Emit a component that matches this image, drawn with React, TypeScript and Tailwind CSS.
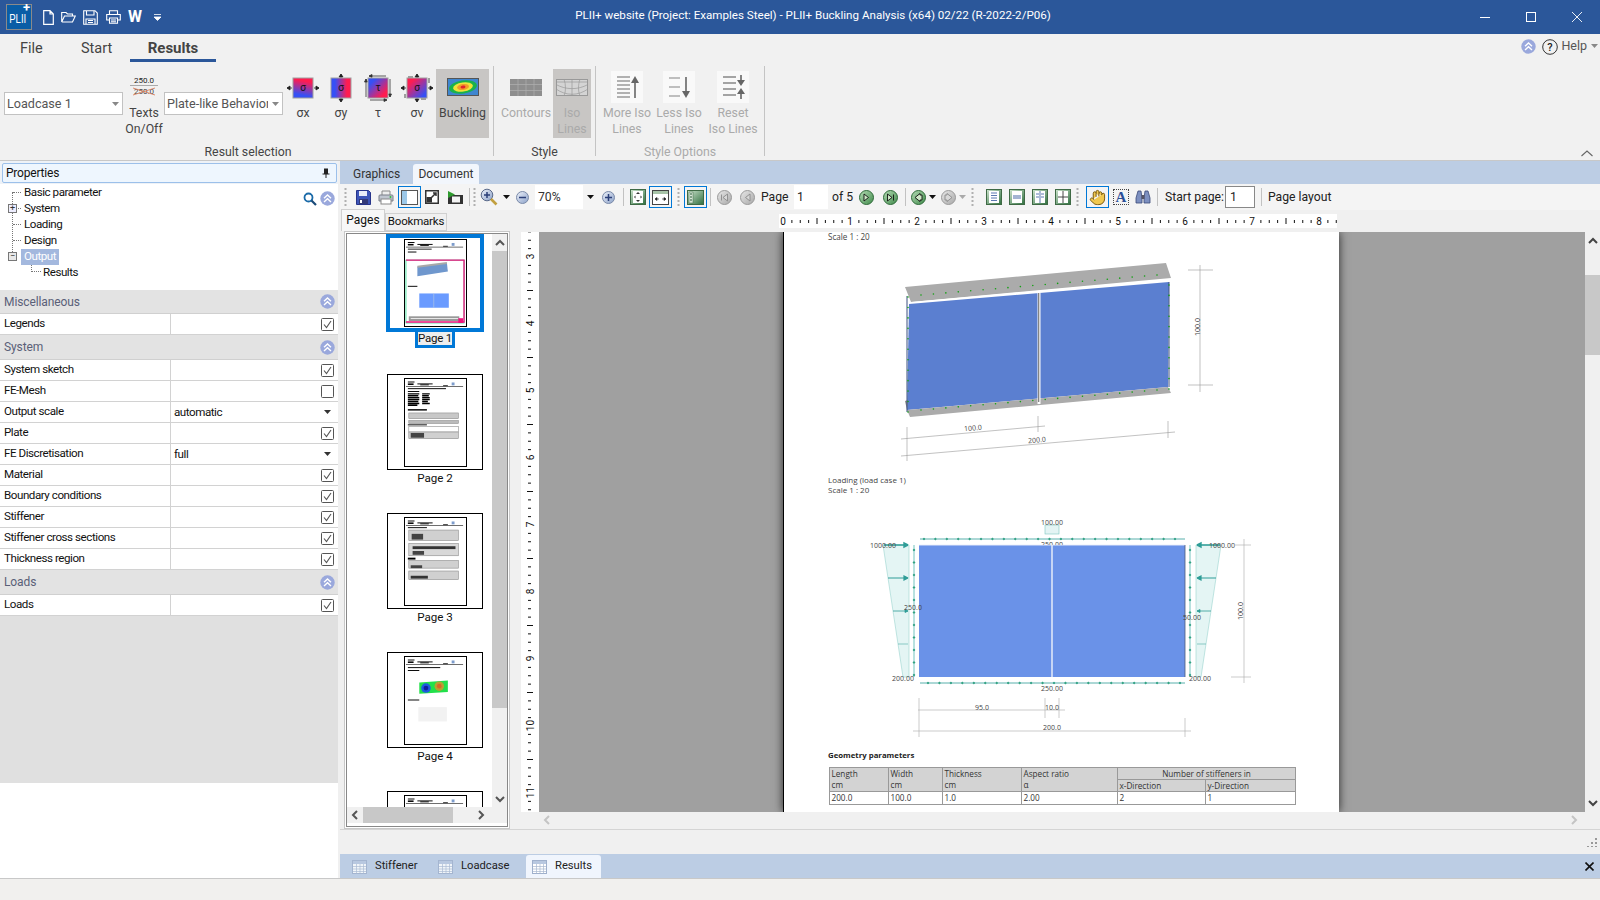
import React from "react";
import { Hand } from "lucide-react";

const S = ({ w, h, vb, children, className }: { w: number; h: number; vb?: string; children: React.ReactNode; className?: string }) => (
  <svg width={w} height={h} viewBox={vb ?? `0 0 ${w} ${h}`} className={"shrink-0 " + (className ?? "")}>{children}</svg>
);

const Defs = () => (
  <svg width="0" height="0" className="absolute">
    <defs>
      <linearGradient id="gx" x1="0.6" y1="0" x2="0.4" y2="1"><stop offset="0.15" stopColor="#ff1c50" /><stop offset="0.85" stopColor="#3650f5" /></linearGradient>
      <linearGradient id="gy" x1="0" y1="0.5" x2="1" y2="0.5"><stop offset="0.2" stopColor="#3650f5" /><stop offset="0.8" stopColor="#ff1c50" /></linearGradient>
      <linearGradient id="gt" x1="0" y1="0" x2="1" y2="1"><stop offset="0.2" stopColor="#3650f5" /><stop offset="0.8" stopColor="#ff1c50" /></linearGradient>
      <linearGradient id="gv" x1="0" y1="0" x2="1" y2="1"><stop offset="0.2" stopColor="#ff1c50" /><stop offset="0.85" stopColor="#3650f5" /></linearGradient>
      <linearGradient id="grn" x1="0" y1="0" x2="1" y2="1"><stop offset="0" stopColor="#b6dcb6" /><stop offset="1" stopColor="#3f8a4a" /></linearGradient>
      <linearGradient id="gry" x1="0" y1="0" x2="1" y2="1"><stop offset="0" stopColor="#e8e8e8" /><stop offset="1" stopColor="#a8a8a8" /></linearGradient>
      <linearGradient id="sq" x1="0" y1="0" x2="1" y2="1"><stop offset="0" stopColor="#cfe5cf" /><stop offset="1" stopColor="#2f6f3f" /></linearGradient>
      <linearGradient id="blu" x1="0" y1="0" x2="1" y2="1"><stop offset="0" stopColor="#eef2fa" /><stop offset="1" stopColor="#8aa0c8" /></linearGradient>
    </defs>
  </svg>
);

const Chevs = () => (
  <S w={15} h={15}>
    <circle cx="7.5" cy="7.5" r="7.2" fill="#9aa8dc" />
    <path d="M4 7.2 7.5 4 11 7.2M4 11 7.5 7.8 11 11" stroke="#fff" strokeWidth="1.4" fill="none" />
  </S>
);

const Check = ({ on = true }: { on?: boolean }) => (
  <S w={13} h={13}>
    <rect x="0.5" y="0.5" width="12" height="12" rx="1" fill="#fff" stroke="#555" />
    {on && <path d="M3 6.5 5.5 9.5 10 3" stroke="#555" strokeWidth="1.1" fill="none" />}
  </S>
);

const Caret = ({ c = "#111" }: { c?: string }) => (
  <S w={7} h={4}><path d="M0 0h7L3.5 4z" fill={c} /></S>
);

const Combo = ({ text, className }: { text: string; className: string }) => (
  <div className={"w-[119px] h-[23px] bg-white border border-[#c2c2c2] flex items-center pl-[2px] pr-[3px] text-[12.6px] text-[#555] " + className}>
    <span className="flex-1 overflow-hidden whitespace-nowrap mr-[4px] pt-[1px]">{text}</span>
    <Caret c="#888" />
  </div>
);

const Btn = ({ icon, children, className }: { icon: React.ReactNode; children: React.ReactNode; className: string }) => (
  <div className={"mt-[7px] h-[69px] flex flex-col items-center shrink-0 " + className}>
    <div className="h-[36px] flex items-center justify-center">{icon}</div>
    <div className="text-center leading-[15.5px] text-[12.3px] pt-[1px]">{children}</div>
  </div>
);

const Stress = ({ g, sym, kind }: { g: string; sym: string; kind: "x" | "y" | "t" | "v" }) => (
  <S w={32} h={28} vb="0 0 32 28" className="mt-[2px]">
    {(kind === "x" || kind === "v") && <path d="M0 14h5M27 14h5M0 14l3-2v4zM32 14l-3-2v4z" stroke="#222" strokeWidth="0.8" fill="#222" />}
    {(kind === "y" || kind === "v") && <path d="M16 0v4M16 24v4M16 0l-2 3h4zM16 28l-2-3h4z" stroke="#222" strokeWidth="0.8" fill="#222" />}
    {kind === "t" && <path d="M7 2h17M8 26h17M4 5v18M28 5v18M7 2l3-1.5v3zM25 26l-3-1.5v3zM4 5l-1.5 3h3zM28 23l-1.5-3h3z" stroke="#333" strokeWidth="0.8" fill="#333" />}
    {kind === "v" && <path d="M7 3h5M20 25h5M4 20v4M28 4v5" stroke="#222" strokeWidth="0.8" fill="none" />}
    <rect x="6" y="4" width="20" height="20" fill={`url(#${g})`} stroke="#a0a0a0" />
    <text x="16" y="17" textAnchor="middle" fontSize="10" fill="#111">{sym}</text>
  </S>
);

const IsoBtnBg = ({ children }: { children: React.ReactNode }) => (
  <S w={32} h={32}><rect width="32" height="32" fill="#f9f9f9" />{children}</S>
);

const Grip = ({ className }: { className: string }) => (
  <S w={3} h={20} vb="0 0 3 20" className={className}>
    {[1, 5, 9, 13, 17].map((y) => <rect key={y} x="0.5" y={y} width="2" height="2" fill="#b0b0b0" />)}
  </S>
);
const Sep = ({ className }: { className: string }) => <div className={"w-px h-[18px] bg-[#c2c2c2] shrink-0 " + className} />;

const Boxed = ({ className, children }: { className: string; children: React.ReactNode }) => (
  <div className={"w-[23px] h-[22px] border border-[#0078d7] flex items-center justify-center shrink-0 " + className}>{children}</div>
);

const Round = ({ on, glyph, className }: { on: boolean; glyph: string; className: string }) => (
  <S w={15} h={15} className={className}>
    <circle cx="7.5" cy="7.5" r="7" fill={on ? "url(#grn)" : "url(#gry)"} stroke={on ? "#2f6b3a" : "#9a9a9a"} />
    <path d={glyph} fill={on ? "#cfe8c8" : "#d8d8d8"} stroke={on ? "#111" : "#8a8a8a"} strokeWidth="0.9" />
  </S>
);

const SqBtn = ({ className, children }: { className?: string; children: React.ReactNode }) => (
  <S w={16} h={16} className={className}>
    <rect x="0.5" y="0.5" width="15" height="15" fill="url(#sq)" stroke="#3f6a45" />
    <rect x="3" y="2" width="10" height="12" fill="#fff" />
    {children}
  </S>
);

const treeDots = "border-dotted border-[#777]";

const TreeRow = ({ children, indent = 24, sel }: { children: string; indent?: number; sel?: boolean }) => (
  <div className="h-[16px] flex items-center relative text-[11.6px] tracking-[-0.45px]" style={{ paddingLeft: indent }}>
    <span className={sel ? "bg-[#a3b8de] text-white h-[16px] px-[3px] -ml-[3px] leading-[15px]" : ""}>{children}</span>
  </div>
);

const PropRow = ({ label, value, check, on = true, combo }: { label: string; value?: string; check?: boolean; on?: boolean; combo?: boolean }) => (
  <div className="h-[21px] flex bg-white border-b border-[#d2d2d2] text-[11.6px] tracking-[-0.45px]">
    <div className="w-[171px] border-r border-[#d2d2d2] pl-[4px] flex items-center">{label}</div>
    <div className="flex-1 flex items-center justify-between pl-[3px] pr-[4px]">
      <span className="pt-[1px]">{value}</span>
      {check && <Check on={on} />}
      {combo && <span className="mr-[3px]"><Caret c="#333" /></span>}
    </div>
  </div>
);

const SecHead = ({ label, h }: { label: string; h: string }) => (
  <div className={"bg-[#e3e3e3] border-b border-[#d0d0d0] flex items-center justify-between pl-[4px] pr-[3px] text-[12px] tracking-[-0.1px] text-[#5a5f78] " + h}>
    <span>{label}</span>
    <Chevs />
  </div>
);

const ThumbHead = () => (
  <g fill="#000">
    <rect x="3" y="2" width="7" height="1" />
    <rect x="3" y="4" width="6" height="1.6" /><rect x="13" y="4" width="16" height="1" /><rect x="16" y="5" width="9" height="1" />
    <rect x="40" y="6" width="5" height="0.8" /><rect x="1" y="7" width="60" height="0.6" />
    <rect x="49" y="3" width="3" height="3" fill="#7d9ccc" />
  </g>
);

const ThumbContent = ({ n }: { n: number }) => {
  if (n === 1)
    return (
      <>
        <ThumbHead />
        <rect x="3" y="9" width="25" height="0.9" /><rect x="3" y="12" width="9" height="1" />
        <path d="M13 28 44 24 45 33 13 38z" fill="#6f97cd" />
        <path d="M13 27 44 23 44 25 13 29z" fill="#a8a8a8" />
        <rect x="3" y="48" width="10" height="1" />
        <rect x="15" y="56" width="31" height="15" fill="#6a9bff" />
        <rect x="30" y="56" width="0.6" height="15" fill="#bcd" />
        <rect x="4" y="80" width="53" height="5" fill="#999" />
        <rect x="6" y="82" width="50" height="0.8" fill="#fff" />
        <rect x="1" y="21" width="61" height="66" fill="none" stroke="#1fd98a" strokeWidth="0.8" />
        <path d="M1 21H62V86H1" fill="none" stroke="#f0127e" strokeWidth="1.4" />
        <rect x="56" y="82" width="5" height="5" fill="#f0127e" />
      </>
    );
  if (n === 2)
    return (
      <>
        <ThumbHead />
        <rect x="3" y="9" width="40" height="1" /><rect x="3" y="12" width="12" height="1" />
        <path d="M3 15H15M3 17H14M3 19H15M3 21H15M3 23H14M3 25H15M3 27H13M18 15H26M18 17H25M18 19H26M18 21H26M18 23H24M18 25H26" stroke="#000" strokeWidth="1.5" />
        <rect x="3" y="31" width="20" height="1.5" />
        <rect x="4" y="35" width="52" height="6" fill="#c8c8c8" stroke="#888" strokeWidth="0.6" />
        <rect x="4" y="43" width="52" height="3" fill="#bbb" stroke="#888" strokeWidth="0.6" />
        <rect x="3" y="47" width="20" height="1" />
        <rect x="4" y="49" width="52" height="6" fill="#fff" stroke="#888" strokeWidth="0.6" />
        <rect x="4" y="55" width="52" height="7" fill="#d0d0d0" stroke="#888" strokeWidth="0.6" />
        <rect x="6" y="56" width="14" height="5" fill="#444" />
      </>
    );
  if (n === 3)
    return (
      <>
        <ThumbHead />
        <rect x="3" y="9" width="20" height="1" />
        <rect x="4" y="12" width="52" height="11" fill="#d0d0d0" stroke="#888" strokeWidth="0.6" />
        <rect x="7" y="16" width="12" height="6" fill="#444" />
        <rect x="4" y="26" width="52" height="13" fill="#d8d8d8" stroke="#888" strokeWidth="0.6" />
        <rect x="8" y="29" width="45" height="3" fill="#333" />
        <rect x="8" y="34" width="12" height="4" fill="#444" />
        <rect x="3" y="41" width="8" height="2" />
        <rect x="4" y="44" width="52" height="8" fill="#d0d0d0" stroke="#888" strokeWidth="0.6" />
        <rect x="6" y="49" width="12" height="3" fill="#444" />
        <rect x="4" y="55" width="52" height="9" fill="#d0d0d0" stroke="#888" strokeWidth="0.6" />
        <rect x="6" y="60" width="18" height="3" fill="#333" />
      </>
    );
  if (n === 4)
    return (
      <>
        <ThumbHead />
        <rect x="3" y="10" width="34" height="1" /><rect x="3" y="13" width="12" height="1" />
        <path d="M15 26 45 24 45 36 15 38z" fill="#22e04a" />
        <circle cx="22" cy="32" r="5" fill="#1e5adf" /><circle cx="22" cy="32" r="2.5" fill="#101ea0" />
        <circle cx="36" cy="30" r="5" fill="#b8a030" /><circle cx="36" cy="30" r="2.5" fill="#d8642a" />
        <rect x="3" y="44" width="12" height="1" />
        <rect x="14" y="52" width="30" height="15" fill="#f2f2f2" />
      </>
    );
  return <ThumbHead />;
};

const Thumb = ({ n }: { n: number }) => (
  <div className="shrink-0">
    <div className="ml-[40px] w-[96px] h-[96px] border-[1.5px] border-black flex justify-center items-start pt-[3px]">
      <div className="w-[63px] h-[89px] border-[1.5px] border-black bg-white">
        <svg width="60" height="86" viewBox="0 0 63 89"><ThumbContent n={n} /></svg>
      </div>
    </div>
    {n < 5 && <div className="h-[20px] mb-[23px] ml-[40px] w-[96px] text-center text-[11.6px] leading-[16px]">{`Page ${n}`}</div>}
  </div>
);

const ArrowS = ({ dir, c = "#555" }: { dir: "u" | "d" | "l" | "r"; c?: string }) => {
  const d = { u: "M1 6 5 2 9 6", d: "M1 2 5 6 9 2", l: "M6 1 2 5 6 9", r: "M2 1 6 5 2 9" }[dir];
  const hz = dir === "u" || dir === "d";
  return (
    <S w={hz ? 10 : 8} h={hz ? 8 : 10}>
      <path d={d} stroke={c} strokeWidth="2" fill="none" />
    </S>
  );
};

const HRuler = () => (
  <svg width="558" height="14" viewBox="-4 0 558 14" className="block bg-white">
    {Array.from({ length: 67 }).map((_, i) => {
      const x = i * 8.375;
      if (i % 8 === 0) return <text key={i} x={x} y="11" textAnchor="middle" fontSize="10" fill="#111">{i / 8}</text>;
      return <rect key={i} x={x} y={i % 4 === 0 ? 4 : 6} width="1" height={i % 4 === 0 ? 6 : 3} fill="#111" />;
    })}
  </svg>
);

const VRuler = () => (
  <svg width="18" height="580" viewBox="0 232 18 580" className="block bg-white shrink-0">
    {Array.from({ length: 72 }).map((_, i) => {
      const y = 223 + i * 8.375;
      const k = i + 4;
      if (k % 8 === 0) {
        const n = k / 8 + 2;
        return <text key={i} x="9" y={y} textAnchor="middle" dominantBaseline="central" fontSize="10" fill="#111" transform={`rotate(-90 9 ${y})`}>{n}</text>;
      }
      return <rect key={i} x={k % 4 === 0 ? 6 : 7} y={y} width={k % 4 === 0 ? 6 : 3} height="1" fill="#111" />;
    })}
  </svg>
);

const lerp = (a: number, b: number, t: number) => a + (b - a) * t;

const Dots = ({ x1, y1, x2, y2, n }: { x1: number; y1: number; x2: number; y2: number; n: number }) => (
  <>
    {Array.from({ length: n }).map((_, i) => (
      <circle key={i} cx={lerp(x1, x2, i / (n - 1))} cy={lerp(y1, y2, i / (n - 1))} r="0.8" fill="#12a012" />
    ))}
  </>
);

const T = ({ x, y, children, rot, a = "middle" }: { x: number; y: number; children: string; rot?: number; a?: "middle" | "start" }) => (
  <text x={x} y={y} textAnchor={a} dominantBaseline="central" fontSize="7" fill="#444" transform={rot ? `rotate(${rot} ${x} ${y})` : undefined}>{children}</text>
);

const Drawing1 = () => (
  <svg width="555" height="232" viewBox="784 242 555 232" className="block">
    <path d="M905 287 1166 263 1171 278 911 302z" fill="#ababab" />
    <path d="M911 302 1171 279 1171 281 911 304z" fill="#fff" />
    <path d="M909 304 1169 282 1168 387 907 410z" fill="#5b7fd0" />
    <path d="M907 410 1168 387 1171 393 910 417z" fill="#ababab" />
    <path d="M908 400 905 401 907 410z" fill="#888" />
    <path d="M907 296V412" stroke="#3a4f80" strokeWidth="1" />
    <path d="M1169 282V387" stroke="#3a4f80" strokeWidth="1" />
    <path d="M1039 293V404" stroke="#fff" strokeWidth="3" />
    <path d="M1038.7 293V402" stroke="#777" strokeWidth="1.2" />
    <Dots x1={921} y1={295} x2={1157} y2={275} n={20} />
    <Dots x1={921} y1={410} x2={1157} y2={390} n={20} />
    <Dots x1={908} y1={297} x2={908} y2={412} n={12} />
    <Dots x1={1169} y1={285} x2={1169} y2={389} n={11} />
    <g stroke="#999" strokeWidth="0.6" fill="none">
      <path d="M901 439 1045 426M901 456 1175 432M907 427V461M1038 416V432M1168 421V438" />
      <path d="M1188 270H1213M1188 385H1213M1200 265V392" />
    </g>
    <T x={973} y={428} rot={-5}>100.0</T>
    <T x={1037} y={440} rot={-5}>200.0</T>
    <T x={1197} y={327} rot={-90}>100.0</T>
  </svg>
);

const Drawing2 = () => (
  <svg width="555" height="254" viewBox="784 494 555 254" className="block">
    <rect x="1045" y="525" width="14" height="9" fill="#e4f4f4" stroke="#7cc6c0" strokeWidth="0.6" />
    <path d="M883 545 909 545 909 677 903 677z" fill="#e4f5f4" stroke="#9bd3cf" strokeWidth="0.6" />
    <path d="M1196 545 1221 545 1201 677 1196 677z" fill="#e4f5f4" stroke="#9bd3cf" strokeWidth="0.6" />
    <g stroke="#2f9d97" fill="#2f9d97" strokeWidth="0.8">
      <path d="M920 539H1185M920 683H1185" />
      <path d="M914 545V677M1190 545V677" stroke="#4fb5af" />
      <path d="M884 545H908L904 543V547L908 545" strokeWidth="1.4" />
      <path d="M888 578H908L904 576V580L908 578" strokeWidth="1.2" />
      <path d="M893 611H908L905 609.5V612.5L908 611" strokeWidth="0.8" />
      <path d="M898 644H908" strokeWidth="0.5" />
      <path d="M1220 545H1197L1201 543V547L1197 545" strokeWidth="1.4" />
      <path d="M1216 578H1197L1201 576V580L1197 578" strokeWidth="1.2" />
      <path d="M1211 611H1197L1200 609.5V612.5L1197 611" strokeWidth="0.8" />
      <path d="M1206 644H1197" strokeWidth="0.5" />
      <Dots x1={924} y1={539} x2={1175} y2={539} n={23} />
      <Dots x1={928} y1={683} x2={1180} y2={683} n={23} />
      <Dots x1={914} y1={550} x2={914} y2={675} n={11} />
      <Dots x1={1190} y1={550} x2={1190} y2={675} n={11} />
    </g>
    <rect x="1030" y="541" width="44" height="4" fill="#fff" />
    <T x={1052} y={544}>250.00</T>
    <rect x="919" y="545" width="266" height="132" fill="#6a92e8" />
    <path d="M919 545.3H1185" stroke="#c9d6f5" strokeWidth="0.8" />
    <path d="M1052 545V677" stroke="#dfe6f8" strokeWidth="1.6" />
    <path d="M1185 545V677" stroke="#4d5a78" strokeWidth="0.8" />
    <g stroke="#aaa" strokeWidth="0.6" fill="none">
      <path d="M1235 545H1251M1231 677H1251M1244 539V683" />
      <path d="M918 710H1065M919 698V718M1045 698V718M1059 698V718" />
      <path d="M913 731H1191M919 718V737M1185 718V737" />
    </g>
    <T x={1052} y={522}>100.00</T>
    <T x={883} y={545}>1000.00</T>
    <T x={1222} y={545}>1000.00</T>
    <T x={913} y={607}>250.0</T>
    <T x={1192} y={617}>50.00</T>
    <T x={903} y={678}>200.00</T>
    <T x={1200} y={678}>200.00</T>
    <T x={1052} y={688}>250.00</T>
    <T x={982} y={707}>95.0</T>
    <T x={1052} y={707}>10.0</T>
    <T x={1052} y={727}>200.0</T>
    <T x={1240} y={611} rot={-90}>100.0</T>
  </svg>
);

const Cell = ({ children, className, rowSpan, colSpan }: { children: React.ReactNode; className?: string; rowSpan?: number; colSpan?: number }) => (
  <td rowSpan={rowSpan} colSpan={colSpan} className={"border border-[#999] px-[1.5px] py-0 leading-[11px] align-top " + (className ?? "")}>{children}</td>
);

const GridIc = ({ faded }: { faded?: boolean }) => (
  <S w={15} h={14} vb="0 0 15 14" className={faded ? "opacity-80" : ""}>
    <rect x="0.5" y="0.5" width="14" height="13" fill="#fff" stroke="#9fb0cc" />
    <rect x="1" y="1" width="13" height="3" fill="#b8c8e0" />
    <path d="M1 6.5H14M1 9H14M1 11.5H14M4.5 4V13.5M8 4V13.5M11.5 4V13.5" stroke="#a8b8d0" strokeWidth="0.7" />
  </S>
);

export default function App() {
  return (
    <div className="w-[1600px] h-[900px] overflow-hidden flex flex-col bg-[#f0f0f0] text-[#111] text-[12px] [font-family:Roboto,sans-serif]">
      <Defs />
      {/* title bar */}
      <div className="h-[34px] bg-[#2b579a] flex items-center text-white shrink-0 relative">
        <div className="ml-[6px] w-[26px] h-[26px] bg-[#0a5da6] border border-[#8a8a8a] relative flex items-center justify-center shrink-0">
          <span className="text-[12px] leading-none mt-[4px] mr-[2px] scale-x-[0.8] [font-family:'Liberation_Sans',sans-serif]">PLII</span>
          <span className="absolute right-[1px] top-[-4px] text-[13px] leading-none font-bold">+</span>
        </div>
        <S w={11} h={15} className="ml-[11px]"><path d="M.7.7H7L10.3 4V14.3H.7zM7 .7V4H10.3" fill="none" stroke="#fff" strokeWidth="1.2" /></S>
        <S w={15} h={12} className="ml-[7px]"><path d="M.7 11V1.5H5L6.5 3H11.5V5M.7 11H11.5L14.3 5H3.5L.7 11" fill="none" stroke="#fff" strokeWidth="1.1" /></S>
        <S w={15} h={15} className="ml-[7px]"><path d="M.7.7H12L14.3 3V14.3H.7zM3.5 .7V5H11V.7M3 14V9H12V14M5 10.5H10M5 12.5H10" fill="none" stroke="#fff" strokeWidth="1.1" /></S>
        <S w={15} h={14} className="ml-[8px]"><path d="M3.5 4.5V.7H11.5V4.5M3.5 10H.7V4.5H14.3V10H11.5M3.5 8H11.5V13.3H3.5zM5 10H10M5 11.8H10" fill="none" stroke="#fff" strokeWidth="1.1" /></S>
        <span className="ml-[7px] text-[16px] font-bold leading-none w-[16px]">W</span>
        <S w={7} h={7} className="ml-[10px]"><path d="M0 .5H7M0 3H7L3.5 6.5z" stroke="#fff" strokeWidth="0.8" fill="#fff" /></S>
        <div className="absolute left-0 right-0 top-0 h-[32px] flex items-center justify-center pl-[26px] text-[11.6px] pointer-events-none whitespace-nowrap">
          PLII+ website (Project: Examples Steel) - PLII+ Buckling Analysis (x64) 02/22 (R-2022-2/P06)
        </div>
        <div className="flex-1" />
        <S w={10} h={2} className="mr-[36px] mt-[1px]"><rect width="10" height="1" fill="#fff" /></S>
        <S w={10} h={10} className="mr-[36px]"><rect x="0.5" y="0.5" width="9" height="9" fill="none" stroke="#fff" /></S>
        <S w={10} h={10} className="mr-[18px]"><path d="M0 0 10 10M10 0 0 10" stroke="#fff" strokeWidth="0.9" /></S>
      </div>

      {/* tab row */}
      <div className="h-[28px] shrink-0 flex items-stretch bg-[#f1f1f1] text-[14.5px] text-[#444]">
        <div className="w-[63px] pl-[20px] pt-[2px] flex items-center">File</div>
        <div className="w-[67px] pl-[18px] pt-[2px] flex items-center">Start</div>
        <div className="w-[86px] flex items-center justify-center font-bold text-[15px] border-b-[3px] border-[#2b579a] pt-[4px]">Results</div>
        <div className="flex-1" />
        <div className="flex items-center pb-[3px] pr-[2px] text-[12.5px] text-[#555]">
          <Chevs />
          <S w={16} h={16} className="ml-[6px]">
            <circle cx="8" cy="8" r="7.3" fill="none" stroke="#333" />
            <text x="8" y="12" textAnchor="middle" fontSize="11" fill="#222" fontWeight="500">?</text>
          </S>
          <span className="ml-[3px]">Help</span>
          <span className="ml-[4px] mb-[2px]"><Caret c="#888" /></span>
        </div>
      </div>

      {/* ribbon */}
      <div className="h-[99px] shrink-0 flex bg-[#f1f1f1] border-b border-[#c8c8c8] text-[#444]">
        <div className="w-[493px] flex flex-col shrink-0">
          <div className="h-[82px] flex items-start">
            <Combo text="Loadcase 1" className="ml-[4px] mt-[30px] shrink-0" />
            <Btn className="ml-[4px] w-[34px]" icon={
              <S w={28} h={22}>
                <text x="14" y="7" textAnchor="middle" fontSize="8" fill="#222">250.0</text>
                <rect x="0" y="9" width="28" height="1" fill="#aaa" />
                <text x="14" y="18" textAnchor="middle" fontSize="8" fill="#444">250.0</text>
                <path d="M3 12 25 19M3 19 25 12" stroke="#d88060" strokeWidth="0.9" />
              </S>
            }>Texts<br />On/Off</Btn>
            <Combo text="Plate-like Behavior" className="ml-[3px] mt-[30px] shrink-0" />
            <Btn className="ml-[3px] w-[34px]" icon={<Stress g="gx" sym="σ" kind="x" />}>σx</Btn>
            <Btn className="ml-[4px] w-[34px]" icon={<Stress g="gy" sym="σ" kind="y" />}>σy</Btn>
            <Btn className="ml-[3px] w-[34px]" icon={<Stress g="gt" sym="τ" kind="t" />}>τ</Btn>
            <Btn className="ml-[5px] w-[34px]" icon={<Stress g="gv" sym="σ" kind="v" />}>σv</Btn>
            <Btn className="ml-[2px] w-[53px] bg-[#c8c6c4]" icon={
              <S w={32} h={18}>
                <rect x="0.5" y="0.5" width="31" height="17" fill="#3f86cf" stroke="#555" />
                <g transform="rotate(-8 16 9)">
                  <ellipse cx="16" cy="9" rx="14" ry="6.5" fill="#1bb24a" />
                  <ellipse cx="16" cy="9" rx="10" ry="4.5" fill="#eee33a" />
                  <ellipse cx="16" cy="9" rx="6" ry="3" fill="#f39a2a" />
                  <ellipse cx="16" cy="9" rx="2.5" ry="1.5" fill="#e0242a" />
                </g>
              </S>
            }>Buckling</Btn>
          </div>
          <div className="h-[16px] text-center leading-[16px] text-[12.3px] pl-[3px]">Result selection</div>
        </div>
        <div className="w-px h-[90px] mt-[4px] bg-[#c4c4c4] shrink-0" />
        <div className="w-[101px] flex flex-col shrink-0 text-[#aaa]">
          <div className="h-[82px] flex items-start">
            <Btn className="ml-[6px] w-[52px]" icon={
              <S w={32} h={17}>
                <rect width="32" height="17" fill="#8e8e8e" />
                <path d="M0 5.5H32M0 11.5H32M8 0V17M16 0V17M24 0V17" stroke="#b0b0b0" strokeWidth="0.7" />
              </S>
            }>Contours</Btn>
            <Btn className="ml-[1px] w-[38px] bg-[#c8c6c4] text-[#aaa]" icon={
              <S w={32} h={17}>
                <rect x="0.5" y="0.5" width="31" height="16" fill="#d4d4d4" stroke="#999" />
                <path d="M0 5.5C10 11 22 11 32 5.5M0 10C10 17 22 17 32 10M8 0C10 6 10 12 8 17M24 0C22 6 22 12 24 17M16 0V17M0 3H32" stroke="#999" strokeWidth="0.7" fill="none" />
              </S>
            }>Iso<br />Lines</Btn>
          </div>
          <div className="h-[16px] text-center leading-[16px] text-[12.3px] text-[#444]">Style</div>
        </div>
        <div className="w-px h-[90px] mt-[4px] bg-[#c4c4c4] shrink-0" />
        <div className="w-[168px] flex flex-col shrink-0 text-[#aaa]">
          <div className="h-[82px] flex items-start">
            <Btn className="ml-[5px] w-[52px]" icon={
              <IsoBtnBg>
                <path d="M6 6H19M6 10H19M6 14H19M6 18H19M6 22H19M6 26H19" stroke="#999" strokeWidth="1.4" />
                <path d="M24 27V10" stroke="#666" strokeWidth="1.6" />
                <path d="M24 5 20 12H28z" fill="#666" />
              </IsoBtnBg>
            }>More Iso<br />Lines</Btn>
            <Btn className="w-[52px]" icon={
              <IsoBtnBg>
                <path d="M6 7H17M6 16H17M6 25H17" stroke="#aaa" strokeWidth="1.4" />
                <path d="M23 6V22" stroke="#666" strokeWidth="1.6" />
                <path d="M23 27 19 20H27z" fill="#666" />
              </IsoBtnBg>
            }>Less Iso<br />Lines</Btn>
            <Btn className="ml-[2px] w-[52px]" icon={
              <IsoBtnBg>
                <path d="M6 6H19M6 12H19M6 18H19M6 24H19" stroke="#888" strokeWidth="1.4" />
                <path d="M24 4V11M24 21V28" stroke="#666" strokeWidth="1.6" />
                <path d="M24 15 20 9H28zM24 17 20 23H28z" fill="#666" />
              </IsoBtnBg>
            }>Reset<br />Iso Lines</Btn>
          </div>
          <div className="h-[16px] text-center leading-[16px] text-[12.3px]">Style Options</div>
        </div>
        <div className="w-px h-[90px] mt-[4px] bg-[#c4c4c4] shrink-0" />
        <div className="flex-1 flex justify-end items-end pb-[3px] pr-[7px]">
          <S w={12} h={7}><path d="M.5 6 6 1 11.5 6" stroke="#666" strokeWidth="1.1" fill="none" /></S>
        </div>
      </div>

      {/* main */}
      <div className="flex-1 flex min-h-0">
        {/* left panel */}
        <div className="w-[340px] shrink-0 flex flex-col bg-[#f0f0f0] pr-[2px]">
          <div className="h-[23px] shrink-0 pt-[2px] pl-[2px] pr-[1px] bg-[#eef2f7]">
            <div className="h-[20px] bg-[#eef6fe] border border-[#9cc0ea] rounded-[2px] flex items-center justify-between pl-[3px] pr-[6px] text-[12px] tracking-[-0.2px]">
              <span>Properties</span>
              <S w={8} h={10}><path d="M2 .5H6V5.5H7.5V6.5H4.5V10H3.5V6.5H.5V5.5H2z" fill="#222" /></S>
            </div>
          </div>
          <div className="h-[106px] shrink-0 bg-white relative pt-[0.5px]">
            <div className={"absolute left-[12px] top-[8px] h-[64px] border-l " + treeDots} />
            {[8, 24, 40, 56].map((t) => (
              <div key={t} className={"absolute left-[13px] w-[8px] border-t " + treeDots} style={{ top: t }} />
            ))}
            <div className={"absolute left-[31px] top-[72px] h-[16px] w-[10px] border-l border-b " + treeDots} />
            <TreeRow>Basic parameter</TreeRow>
            <TreeRow>System</TreeRow>
            <TreeRow>Loading</TreeRow>
            <TreeRow>Design</TreeRow>
            <TreeRow sel>Output</TreeRow>
            <TreeRow indent={43}>Results</TreeRow>
            <div className="absolute left-[8px] top-[20px] w-[9px] h-[9px] bg-[#eef] border border-[#777] flex items-center justify-center text-[9px] leading-none text-[#333]">+</div>
            <div className="absolute left-[8px] top-[68px] w-[9px] h-[9px] bg-[#e8e8e8] border border-[#777] flex items-center justify-center text-[9px] leading-none text-[#333]">−</div>
            <div className="absolute right-[3px] top-[7px] flex items-center gap-[3px]">
              <S w={14} h={14}><circle cx="5.5" cy="5.5" r="4" fill="none" stroke="#1a6aa8" strokeWidth="1.8" /><path d="M8.5 8.5 13 13" stroke="#1a4a78" strokeWidth="2.2" /></S>
              <Chevs />
            </div>
          </div>
          <SecHead label="Miscellaneous" h="h-[24px] shrink-0" />
          <PropRow label="Legends" check />
          <SecHead label="System" h="h-[25px] shrink-0" />
          <PropRow label="System sketch" check />
          <PropRow label="FE-Mesh" check on={false} />
          <PropRow label="Output scale" value="automatic" combo />
          <PropRow label="Plate" check />
          <PropRow label="FE Discretisation" value="full" combo />
          <PropRow label="Material" check />
          <PropRow label="Boundary conditions" check />
          <PropRow label="Stiffener" check />
          <PropRow label="Stiffener cross sections" check />
          <PropRow label="Thickness region" check />
          <SecHead label="Loads" h="h-[25px] shrink-0" />
          <PropRow label="Loads" check />
          <div className="h-[167px] shrink-0 bg-[#e0e0e0]" />
          <div className="flex-1 bg-white" />
        </div>

        {/* right column */}
        <div className="flex-1 min-w-0 flex flex-col">
          <div className="h-[23px] shrink-0 bg-[#bccde4] flex items-end text-[12px]">
            <div className="ml-[13px] w-[60px] h-[20px] flex items-center text-[#333]">Graphics</div>
            <div className="w-[66px] h-[20px] bg-[#f2f6fc] rounded-t-[3px] flex items-center justify-center text-[#333]">Document</div>
          </div>
          {/* toolbar */}
          <div className="h-[26px] shrink-0 bg-[#f4f4f4] flex items-center text-[#222] text-[12.2px]">
            <Grip className="ml-[4px]" />
            <S w={15} h={15} className="ml-[9px]">
              <path d="M.5.5H12.5L14.5 2.5V14.5H.5z" fill="#3d55b8" stroke="#27348a" />
              <rect x="3" y="1" width="8" height="5" fill="#e8ecf8" />
              <rect x="3" y="9" width="9" height="5" fill="#333a78" />
              <rect x="4" y="10" width="2" height="3" fill="#fff" />
            </S>
            <S w={16} h={15} className="ml-[7px]">
              <path d="M4 5V1H12V5" fill="#eee" stroke="#888" />
              <path d="M1 6Q1 5 2 5H14Q15 5 15 6V11H1z" fill="#c0c6d0" stroke="#7a7f88" />
              <rect x="3" y="9" width="10" height="5" fill="#fff" stroke="#888" />
              <circle cx="12.5" cy="7" r="1" fill="#2fbe3c" />
            </S>
            <Boxed className="ml-[4px]">
              <S w={17} h={15}><rect x="0.5" y="0.5" width="16" height="14" fill="#fff" stroke="#555" /><rect x="1" y="1" width="5" height="13" fill="#9cc8e8" /></S>
            </Boxed>
            <S w={14} h={14} className="ml-[4px]">
              <rect width="14" height="14" fill="#333" />
              <rect x="1.5" y="1.5" width="11" height="11" fill="#fff" />
              <rect x="1.5" y="7" width="5.5" height="5.5" fill="#333" />
              <path d="M6 8 11 3M8 3H11V6" stroke="#333" strokeWidth="1.5" fill="none" />
            </S>
            <S w={16} h={13} className="ml-[8px]">
              <rect x="1" y="4" width="15" height="9" fill="#333" />
              <rect x="5" y="5.5" width="8" height="6" fill="#f4f4f4" />
              <path d="M1 0 8 3.5 1 7z" fill="#2e9a2e" />
            </S>
            <Sep className="ml-[6px]" />
            <Grip className="ml-[3px]" />
            <S w={18} h={18} className="ml-[4px]">
              <circle cx="7" cy="7" r="5.8" fill="url(#blu)" stroke="#5a6a8a" />
              <path d="M4 7H10M7 4V10" stroke="#2b3f78" strokeWidth="1.5" />
              <path d="M11 11 16.5 16.5" stroke="#c2a040" strokeWidth="2.6" />
            </S>
            <span className="ml-[5px]"><Caret /></span>
            <S w={13} h={13} className="ml-[6px]"><circle cx="6.5" cy="6.5" r="6" fill="url(#blu)" stroke="#7a8aa8" /><path d="M3 6.5H10" stroke="#2b3f78" strokeWidth="1.5" /></S>
            <div className="ml-[6px] w-[48px] h-[24px] bg-white pl-[3px] flex items-center text-[#333] shrink-0">70%</div>
            <span className="ml-[4px]"><Caret /></span>
            <S w={13} h={13} className="ml-[8px]"><circle cx="6.5" cy="6.5" r="6" fill="url(#blu)" stroke="#7a8aa8" /><path d="M3 6.5H10M6.5 3V10" stroke="#2b3f78" strokeWidth="1.5" /></S>
            <Sep className="ml-[8px]" />
            <SqBtn className="ml-[6px]"><path d="M8 3 6 5H10zM8 13 6 11H10zM4 8 5.5 6.5V9.5zM12 8 10.5 6.5V9.5z" fill="#333" /></SqBtn>
            <Boxed className="ml-[3px]">
              <S w={17} h={15}><rect x="0.5" y="0.5" width="16" height="14" fill="#fff" stroke="#444" /><rect x="1" y="1" width="15" height="3" fill="#a8c4a8" /><path d="M3 9H7M10 9H14M3 9 5 7.5V10.5zM14 9 12 7.5V10.5z" stroke="#333" strokeWidth="0.7" /></S>
            </Boxed>
            <Grip className="ml-[5px]" />
            <Boxed className="ml-[4px]">
              <S w={17} h={15}><rect x="0.5" y="0.5" width="16" height="14" fill="url(#sq)" stroke="#3f6a45" /><rect x="2" y="2" width="4" height="11" fill="#d8e8d8" stroke="#3f6a45" strokeWidth="0.5" /><path d="M3 4H5M3 7H5M3 10H5" stroke="#2b5a38" /></S>
            </Boxed>
            <Sep className="ml-[3px]" />
            <Round on={false} className="ml-[6px]" glyph="M4.5 4.5V10.5M10.5 4 6 7.5 10.5 11z" />
            <Round on={false} className="ml-[8px]" glyph="M10 4 5.5 7.5 10 11z" />
            <span className="ml-[6px] w-[33px]">Page</span>
            <div className="w-[34px] h-[24px] bg-white flex items-center pl-[3px] shrink-0">1</div>
            <span className="ml-[4px] w-[27px]">of 5</span>
            <Round on className="" glyph="M5 4 9.5 7.5 5 11z" />
            <Round on className="ml-[9px]" glyph="M10.5 4.5V10.5M4.5 4 9 7.5 4.5 11z" />
            <Sep className="ml-[7px]" />
            <Round on className="ml-[5px]" glyph="M9 5V3.5L4 7.5 9 11.5V10H11V5z" />
            <span className="ml-[3px]"><Caret /></span>
            <Round on={false} className="ml-[5px]" glyph="M6 5V3.5L11 7.5 6 11.5V10H4V5z" />
            <span className="ml-[3px]"><Caret c="#aaa" /></span>
            <Grip className="ml-[5px]" />
            <SqBtn className="ml-[12px]"><path d="M5 4H11M5 6.5H11M5 9H11M5 11.5H11" stroke="#4a6aa8" strokeWidth="0.9" /></SqBtn>
            <SqBtn className="ml-[7px]"><path d="M4 7H12M4 9H12" stroke="#4a6aa8" strokeWidth="1.2" /></SqBtn>
            <SqBtn className="ml-[7px]"><path d="M8 2V14M4 5H7M9 5H12M4 8H7M9 8H12" stroke="#4a6aa8" strokeWidth="0.9" /></SqBtn>
            <SqBtn className="ml-[7px]"><path d="M8 2V14M3 8H13" stroke="#333" strokeWidth="0.9" /></SqBtn>
            <Grip className="ml-[5px]" />
            <Boxed className="ml-[7px]">
              <Hand size={17} fill="#f0c850" stroke="#7a5a10" strokeWidth={1.4} />
            </Boxed>
            <div className="ml-[4px] w-[16px] h-[16px] border border-dotted border-[#444] flex items-center justify-center text-[15px] font-bold text-[#2b4f98] [font-family:'Liberation_Serif',serif] leading-none shrink-0">A</div>
            <S w={16} h={15} className="ml-[6px]">
              <path d="M3 1H6L7 8V13H1V8zM10 1H13L15 8V13H9V8z" fill="#7d90c0" stroke="#3a4a78" strokeWidth="0.8" />
              <rect x="6.5" y="5" width="3" height="4" fill="#556" />
            </S>
            <Sep className="ml-[6px]" />
            <span className="ml-[7px] w-[60px] whitespace-nowrap shrink-0">Start page:</span>
            <div className="w-[30px] h-[22px] bg-white border border-[#888] flex items-center pl-[4px] shrink-0">1</div>
            <Sep className="ml-[6px]" />
            <span className="ml-[6px] whitespace-nowrap">Page layout</span>
          </div>

          {/* body */}
          <div className="flex-1 min-h-0 flex">
            {/* thumbs */}
            <div className="w-[181px] shrink-0 flex flex-col">
              <div className="h-[21px] shrink-0 flex items-end pl-[1px] text-[12px] relative z-10">
                <div className="w-[44px] h-[22px] bg-[#f7f7f7] border border-b-0 border-[#d0d0d0] flex items-center justify-center pb-[2px]">Pages</div>
                <div className="w-[62px] h-[18px] bg-[#f0f0f0] border border-[#d0d0d0] flex items-center justify-center text-[11.5px] tracking-[-0.2px]">Bookmarks</div>
              </div>
              <div className="ml-[4px] w-[166px] h-[598px] shrink-0 border border-[#c8c8c8] p-[1px] bg-white">
                <div className="w-full h-full border border-[#888] pb-[3px] flex flex-col bg-white">
                  <div className="flex-1 min-h-0 flex">
                    <div className="w-[145px] shrink-0 overflow-hidden flex flex-col">
                      <div className="ml-[39px] w-[98px] h-[98px] shrink-0 border-[4px] border-[#0078d7] relative">
                        <div className="absolute left-[14px] top-[1px] w-[63px] h-[88px] border-[1.5px] border-black bg-white">
                          <svg width="60" height="85" viewBox="0 0 63 89"><ThumbContent n={1} /></svg>
                        </div>
                      </div>
                      <div className="ml-[68px] -mt-[3px] w-[40px] h-[19px] shrink-0 border-[3px] border-[#0078d7] bg-[#eee] flex items-center justify-center text-[11.5px] whitespace-nowrap tracking-[-0.2px] relative">Page 1</div>
                      <div className="h-[26px] shrink-0" />
                      <Thumb n={2} />
                      <Thumb n={3} />
                      <Thumb n={4} />
                      <Thumb n={5} />
                    </div>
                    <div className="w-[15px] shrink-0 flex flex-col bg-[#f0f0f0]">
                      <div className="h-[17px] flex items-center justify-center"><ArrowS dir="u" /></div>
                      <div className="h-[457px] bg-[#c8c8c8]" />
                      <div className="flex-1" />
                      <div className="h-[17px] flex items-center justify-center"><ArrowS dir="d" /></div>
                    </div>
                  </div>
                  <div className="h-[16px] shrink-0 flex items-center bg-[#f0f0f0]">
                    <div className="w-[16px] flex justify-center"><ArrowS dir="l" /></div>
                    <div className="w-[90px] h-full bg-[#c8c8c8]" />
                    <div className="flex-1" />
                    <div className="w-[25px] flex justify-center"><ArrowS dir="r" /></div>
                    <div className="w-[14px]" />
                  </div>
                </div>
              </div>
            </div>
            {/* viewer */}
            <div className="flex-1 min-w-0 flex flex-col">
              <div className="h-[22px] shrink-0 pt-[4px] pl-[258px] overflow-hidden bg-[#f0f0f0]">
                <HRuler />
              </div>
              <div className="h-[580px] shrink-0 flex">
                <VRuler />
                <div className="w-[1046px] shrink-0 bg-[#a0a0a0] pl-[244px] overflow-hidden">
                  <div className="w-[556px] h-[580px] bg-white border-l border-black shadow-[0_0_9px_rgba(0,0,0,0.75)] overflow-hidden text-[8px] leading-[9.5px] text-[#444] [font-family:'Open_Sans',sans-serif]">
                    <div className="h-[10px] pl-[44px] text-[8.1px] whitespace-nowrap">Scale 1 : 20</div>
                    <Drawing1 />
                    <div className="h-[20px] pl-[44px] pt-[1px] text-[8px] whitespace-nowrap">Loading (load case 1)<br />Scale 1 : 20</div>
                    <Drawing2 />
                    <div className="pl-[44px] h-[19px] pt-[3px] font-bold text-[7.8px] text-[#222] whitespace-nowrap">Geometry parameters</div>
                    <table className="ml-[45px] w-[466px] border-collapse table-fixed text-[8.2px] text-[#333]">
                      <colgroup>
                        <col className="w-[59px]" /><col className="w-[54px]" /><col className="w-[79px]" /><col className="w-[96px]" /><col className="w-[88px]" /><col className="w-[90px]" />
                      </colgroup>
                      <tbody>
                        <tr className="bg-[#d3d3d3] h-[12px]">
                          <Cell rowSpan={2}>Length<br />cm</Cell>
                          <Cell rowSpan={2}>Width<br />cm</Cell>
                          <Cell rowSpan={2}>Thickness<br />cm</Cell>
                          <Cell rowSpan={2}>Aspect ratio<br />α</Cell>
                          <Cell colSpan={2} className="text-center">Number of stiffeners in</Cell>
                        </tr>
                        <tr className="bg-[#d3d3d3] h-[12px]">
                          <Cell>x-Direction</Cell><Cell>y-Direction</Cell>
                        </tr>
                        <tr className="bg-white h-[13px]">
                          <Cell>200.0</Cell><Cell>100.0</Cell><Cell>1.0</Cell><Cell>2.00</Cell><Cell>2</Cell><Cell>1</Cell>
                        </tr>
                      </tbody>
                    </table>
                  </div>
                </div>
                <div className="flex-1 flex flex-col bg-[#f0f0f0]">
                  <div className="h-[18px] flex items-center justify-center"><ArrowS dir="u" c="#444" /></div>
                  <div className="h-[25px]" />
                  <div className="h-[80px] bg-[#c8c8c8]" />
                  <div className="flex-1" />
                  <div className="h-[18px] flex items-center justify-center"><ArrowS dir="d" c="#444" /></div>
                </div>
              </div>
              <div className="h-[16px] shrink-0 flex items-center justify-between pl-[22px] pr-[22px] bg-[#f0f0f0]">
                <ArrowS dir="l" c="#c4c4c4" />
                <ArrowS dir="r" c="#c4c4c4" />
              </div>
            </div>
          </div>

          {/* footer strip */}
          <div className="h-[25px] shrink-0 border-t border-[#d4d4d4] mt-[1px] bg-[#f0f0f0] flex justify-end items-center pr-[3px]">
            <S w={10} h={10}>
              {[[8, 1], [8, 5], [4, 5], [8, 9], [4, 9], [0, 9]].map(([x, y]) => <rect key={`${x}${y}`} x={x} y={y} width="2" height="2" fill="#999" />)}
            </S>
          </div>
          {/* bottom tabs */}
          <div className="h-[24px] shrink-0 bg-[#bccde4] flex items-stretch text-[11.2px] text-[#222] pt-[1px]">
            <div className="ml-[12px] flex items-center"><GridIc faded /><span className="ml-[8px] w-[42px]">Stiffener</span></div>
            <div className="ml-[21px] flex items-center"><GridIc faded /><span className="ml-[8px] w-[50px]">Loadcase</span></div>
            <div className="ml-[15px] w-[75px] bg-[#f0f5fd] rounded-t-[3px] flex items-center pl-[6px]"><GridIc /><span className="ml-[8px]">Results</span></div>
            <div className="flex-1" />
            <div className="flex items-center pr-[6px]"><S w={9} h={9}><path d="M.5.5 8.5 8.5M8.5.5.5 8.5" stroke="#111" strokeWidth="1.6" /></S></div>
          </div>
        </div>
      </div>
      {/* status */}
      <div className="h-[22px] shrink-0 bg-[#f1f0ee] border-t border-[#c8c8c8]" />
    </div>
  );
}
